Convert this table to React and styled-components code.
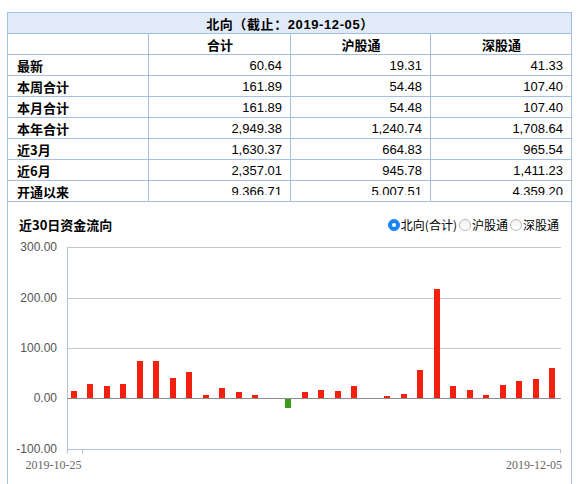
import React from 'react';
import styled, { createGlobalStyle } from 'styled-components';

const BORDER = '#a3bfe6';

const Global = createGlobalStyle`
  html, body { margin: 0; padding: 0; background: #fff; overflow: hidden; }
  body { font-family: "Liberation Sans", "Noto Sans CJK SC", sans-serif; }
`;

const Page = styled.div`
  width: 565px;
  padding: 12px 0 0 7px;
`;

const Table = styled.div`
  display: grid;
  grid-template-columns: 141px 142px 140px 141px;
  border-top: 1px solid ${BORDER};
  border-left: 1px solid ${BORDER};
`;

const Cell = styled.div`
  box-sizing: border-box;
  height: 21px;
  border-right: 1px solid ${BORDER};
  border-bottom: 1px solid ${BORDER};
  display: flex;
  align-items: center;
  justify-content: ${(p) =>
    p.$align === 'right' ? 'flex-end' : p.$align === 'center' ? 'center' : 'flex-start'};
  padding: 0 8px 0 9px;
  font-size: 13px;
  color: #000;
  white-space: nowrap;
  overflow: hidden;
`;

const TitleCell = styled(Cell)`
  grid-column: 1 / -1;
  background: #e0eaf8;
  font-weight: bold;
  letter-spacing: 0.6px;
`;

const HeadCell = styled(Cell)`
  font-weight: bold;
`;

const LabelCell = styled(Cell)`
  font-weight: bold;
  font-family: "Noto Sans CJK SC", sans-serif;
`;

const Value = styled.span`
  display: block;
  line-height: 15px;
  height: ${(p) => (p.$clip ? '11px' : '15px')};
  margin-bottom: ${(p) => (p.$clip ? '4px' : '0')};
  overflow: hidden;
`;

const ChartPanel = styled.div`
  border-left: 1px solid ${BORDER};
  border-right: 1px solid ${BORDER};
  height: 300px;
`;

const ChartHeader = styled.div`
  box-sizing: border-box;
  height: 37px;
  padding: 16px 12px 0 11px;
  display: flex;
  justify-content: space-between;
  align-items: flex-start;
`;

const ChartTitle = styled.div`
  font-family: "Noto Sans CJK SC", sans-serif;
  font-size: 13px;
  font-weight: bold;
  line-height: 14px;
  color: #000;
`;

const RadioGroup = styled.div`
  display: flex;
  align-items: center;
  height: 14px;
  gap: 2px;
`;

const RadioItem = styled.label`
  display: flex;
  align-items: center;
  font-family: "Noto Sans CJK SC", sans-serif;
  font-size: 12px;
  line-height: 14px;
  color: #000;
`;

const Dot = styled.span`
  box-sizing: border-box;
  width: 12px;
  height: 12px;
  margin-right: 1px;
  border-radius: 50%;
  display: flex;
  align-items: center;
  justify-content: center;
  background: ${(p) => (p.$on ? '#1a86f2' : 'linear-gradient(#f2f2f2, #ffffff)')};
  border: 1px solid ${(p) => (p.$on ? '#1a86f2' : '#b9b9b9')};
  &::after {
    content: '';
    width: 4px;
    height: 4px;
    border-radius: 50%;
    background: #fff;
    display: ${(p) => (p.$on ? 'block' : 'none')};
  }
`;

const ChartSvg = styled.svg`
  display: block;
`;

const rows = [
  ['最新', '60.64', '19.31', '41.33'],
  ['本周合计', '161.89', '54.48', '107.40'],
  ['本月合计', '161.89', '54.48', '107.40'],
  ['本年合计', '2,949.38', '1,240.74', '1,708.64'],
  ['近3月', '1,630.37', '664.83', '965.54'],
  ['近6月', '2,357.01', '945.78', '1,411.23'],
  ['开通以来', '9,366.71', '5,007.51', '4,359.20'],
];

const values = [15, 29, 25, 29, 75, 75, 41, 53, 7, 21, 13, 7, 0, -19, 12, 17, 15, 25, 1.5, 5, 9, 57, 217, 25, 17, 7, 27, 35, 39, 61];

const PL = 59;
const PR = 553;
const yv = (v) => 159.3 - v * 0.503;
const ln = (v) => Math.round(yv(v)) + 0.5;

function Chart() {
  const zero = Math.round(yv(0));
  return (
    <ChartSvg width="563" height="245" viewBox="0 0 563 245">
      {[300, 200, 100].map((v) => (
        <line key={v} x1={PL} x2={PR} y1={ln(v)} y2={ln(v)} stroke="#c6c6c6" strokeWidth="1" />
      ))}
      <line x1={PL} x2={PR} y1={ln(-100)} y2={ln(-100)} stroke="#b7c3d3" strokeWidth="1" />
      <line x1={PL + 0.5} x2={PL + 0.5} y1={ln(300)} y2={ln(-100) + 4} stroke="#b7c3d3" strokeWidth="1" />
      <line x1={74.5} x2={74.5} y1={ln(-100)} y2={ln(-100) + 4} stroke="#b7c3d3" strokeWidth="1" />
      <line x1={PR - 0.5} x2={PR - 0.5} y1={ln(-100)} y2={ln(-100) + 4} stroke="#b7c3d3" strokeWidth="1" />
      {values.map((v, i) => {
        const cx = 66 + i * 16.49;
        const top = v >= 0 ? Math.round(yv(v)) : zero;
        const h = v >= 0 ? zero - top : Math.round(yv(v)) - zero;
        if (h <= 0) return null;
        return (
          <rect key={i} x={Math.round(cx - 3)} y={top} width="6" height={h} fill={v >= 0 ? '#f4200f' : '#3d9b1e'} />
        );
      })}
      <line x1={PL} x2={PR} y1={ln(0)} y2={ln(0)} stroke="#8e8e8e" strokeWidth="1" />
      {[300, 200, 100, 0, -100].map((v) => (
        <text
          key={v}
          x="49"
          y={yv(v)}
          textAnchor="end"
          dominantBaseline="central"
          fontFamily="Liberation Sans, sans-serif"
          fontSize="12"
          fill="#555"
        >
          {v.toFixed(2)}
        </text>
      ))}
      <text x="45.5" y="226" textAnchor="middle" dominantBaseline="central" fontFamily="Liberation Serif, serif" fontSize="12" fill="#666">
        2019-10-25
      </text>
      <text x="554" y="226" textAnchor="end" dominantBaseline="central" fontFamily="Liberation Serif, serif" fontSize="12" fill="#666">
        2019-12-05
      </text>
    </ChartSvg>
  );
}

export default function App() {
  return (
    <>
      <Global />
      <Page>
        <Table>
          <TitleCell $align="center">北向（截止：2019-12-05）</TitleCell>
          <HeadCell />
          <HeadCell $align="center">合计</HeadCell>
          <HeadCell $align="center">沪股通</HeadCell>
          <HeadCell $align="center">深股通</HeadCell>
          {rows.map((r, ri) => (
            <React.Fragment key={r[0]}>
              <LabelCell>{r[0]}</LabelCell>
              {r.slice(1).map((v, ci) => (
                <Cell key={ci} $align="right">
                  <Value $clip={ri === rows.length - 1}>{v}</Value>
                </Cell>
              ))}
            </React.Fragment>
          ))}
        </Table>
        <ChartPanel>
          <ChartHeader>
            <ChartTitle>近30日资金流向</ChartTitle>
            <RadioGroup>
              <RadioItem>
                <Dot $on />
                北向(合计)
              </RadioItem>
              <RadioItem>
                <Dot />
                沪股通
              </RadioItem>
              <RadioItem>
                <Dot />
                深股通
              </RadioItem>
            </RadioGroup>
          </ChartHeader>
          <Chart />
        </ChartPanel>
      </Page>
    </>
  );
}
